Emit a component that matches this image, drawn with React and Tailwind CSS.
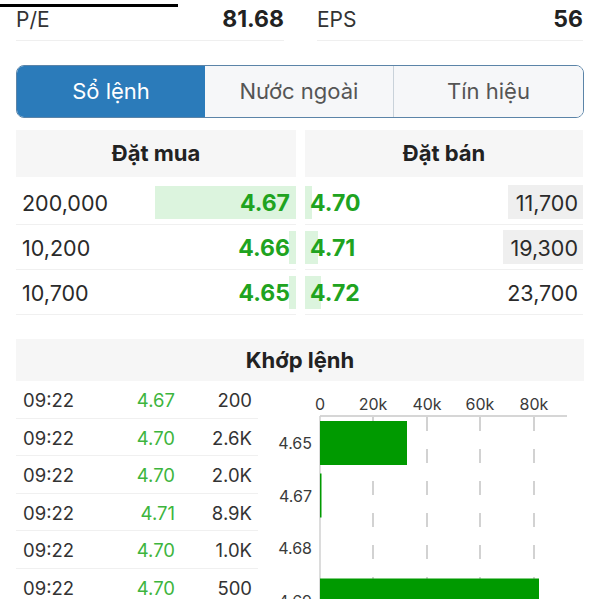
const bids = [
  { qty: '200,000', price: '4.67', bar: 141 },
  { qty: '10,200', price: '4.66', bar: 7 },
  { qty: '10,700', price: '4.65', bar: 7 },
];

const asks = [
  { price: '4.70', qty: '11,700', bar: 7, vol: 75 },
  { price: '4.71', qty: '19,300', bar: 13, vol: 80 },
  { price: '4.72', qty: '23,700', bar: 16, vol: 0 },
];

const trades = [
  { t: '09:22', p: '4.67', v: '200' },
  { t: '09:22', p: '4.70', v: '2.6K' },
  { t: '09:22', p: '4.70', v: '2.0K' },
  { t: '09:22', p: '4.71', v: '8.9K' },
  { t: '09:22', p: '4.70', v: '1.0K' },
  { t: '09:22', p: '4.70', v: '500' },
];

function VolumeChart() {
  const ticks = [
    { x: 62, l: '0' },
    { x: 115, l: '20k' },
    { x: 169, l: '40k' },
    { x: 222, l: '60k' },
    { x: 276, l: '80k' },
  ];
  const cats = [
    { y: 62, l: '4.65', w: 87 },
    { y: 114.5, l: '4.67', w: 1.5 },
    { y: 167, l: '4.68', w: 0 },
    { y: 219.5, l: '4.69', w: 219 },
  ];
  return (
    <svg width="325" height="218" className="block">
      {ticks.slice(1).map((t) => (
        <line key={t.l} x1={t.x} x2={t.x} y1="36" y2="218" stroke="#c4c4c4" strokeWidth="1.5" strokeDasharray="14 18" />
      ))}
      <line x1="62" x2="309" y1="35" y2="35" stroke="#c8c8c8" strokeWidth="1.5" />
      <line x1="62" x2="62" y1="35" y2="218" stroke="#d0d0d0" strokeWidth="1.5" />
      {ticks.map((t) => (
        <text key={t.l} x={t.x} y="29" textAnchor="middle" fontSize="16" fill="#3a3a3a" fontFamily="Inter, sans-serif">
          {t.l}
        </text>
      ))}
      {cats.map((c) => (
        <g key={c.l}>
          {c.w > 0 && <rect x="62" y={c.y - 22} width={c.w} height="44" fill="#009a00" />}
          <text x="54" y={c.y + 6} textAnchor="end" fontSize="16" fill="#3a3a3a" fontFamily="Inter, sans-serif">
            {c.l}
          </text>
        </g>
      ))}
    </svg>
  );
}

export default function App() {
  return (
    <div className="w-[600px] h-[600px] overflow-hidden bg-white text-[#222] font-['Inter',sans-serif]">
      {/* top indicator */}
      <div className="mt-[4px] h-[3px] w-[178px] bg-black" />

      {/* stats */}
      <div className="flex gap-[33px] px-4">
        <div className="w-[268px] h-[34px] pt-[1px] flex justify-between border-b border-[#efefef] leading-[23px]">
          <span className="text-[21px] text-[#333]">P/E</span>
          <span className="text-[23px] font-bold">81.68</span>
        </div>
        <div className="w-[266px] h-[34px] pt-[1px] flex justify-between border-b border-[#efefef] leading-[23px]">
          <span className="text-[21px] text-[#333]">EPS</span>
          <span className="text-[23px] font-bold">56</span>
        </div>
      </div>

      {/* segmented control */}
      <div className="mx-4 mt-[24px] h-[53px] flex rounded-[8px] border-[1.5px] border-[#5b84a8] overflow-hidden text-[22px]">
        <div className="w-[188px] flex items-center justify-center bg-[#2b7bba] text-white">Sổ lệnh</div>
        <div className="w-[189px] flex items-center justify-center bg-[#f6f7f9] text-[#555] border-r border-[#c9d2da]">Nước ngoài</div>
        <div className="flex-1 flex items-center justify-center bg-[#f6f7f9] text-[#555]">Tín hiệu</div>
      </div>

      {/* order book */}
      <div className="mt-[12px] flex gap-[9px] px-4">
        <div className="w-[280px]">
          <div className="h-[47px] mb-[3px] flex items-center justify-center bg-[#f6f6f6] text-[22px] font-bold">Đặt mua</div>
          {bids.map((b) => (
            <div key={b.qty} className="h-[45px] pb-[5px] flex items-end justify-between border-b border-[#f0f0f0]">
              <span className="pl-[6px] pt-[2px] h-[33px] flex items-center text-[21.5px] text-[#2a2a2a]">{b.qty}</span>
              <div className="relative h-[33px] pt-[2px] flex items-center justify-end">
                <div className="absolute right-0 top-0 h-[33px] bg-[#dcf4de]" style={{ width: b.bar }} />
                <span className="relative pr-[6px] text-[23px] font-bold text-[#20a320]">{b.price}</span>
              </div>
            </div>
          ))}
        </div>
        <div className="w-[278px]">
          <div className="h-[47px] mb-[3px] flex items-center justify-center bg-[#f6f6f6] text-[22px] font-bold">Đặt bán</div>
          {asks.map((a) => (
            <div key={a.qty} className="h-[45px] pb-[5px] flex items-end justify-between border-b border-[#f0f0f0]">
              <div className="relative h-[33px] pt-[2px] flex items-center">
                <div className="absolute left-0 top-0 h-[33px] bg-[#dcf4de]" style={{ width: a.bar }} />
                <span className="relative pl-[5px] text-[23px] font-bold text-[#20a320]">{a.price}</span>
              </div>
              <div className="relative h-[34px] pt-[2px] flex items-center justify-end">
                <div className="absolute right-0 top-0 h-[34px] bg-[#efefef]" style={{ width: a.vol }} />
                <span className="relative pr-[5px] text-[21.5px] text-[#2a2a2a]">{a.qty}</span>
              </div>
            </div>
          ))}
        </div>
      </div>

      {/* matched orders */}
      <div className="mx-4 mt-[24px] h-[42px] flex items-center justify-center bg-[#f6f6f6] text-[22px] font-bold">Khớp lệnh</div>
      <div className="flex pl-4">
        <div className="w-[242px]">
          {trades.map((r, i) => (
            <div key={i} className="h-[37.5px] pt-[4px] flex items-center border-b border-[#f0f0f0] text-[18.5px]">
              <span className="w-[90px] pl-[7px] text-[#333]">{r.t}</span>
              <span className="w-[69px] text-right text-[#3db53d]">{r.p}</span>
              <span className="w-[77px] text-right text-[#333]">{r.v}</span>
            </div>
          ))}
        </div>
        <VolumeChart />
      </div>
    </div>
  );
}
